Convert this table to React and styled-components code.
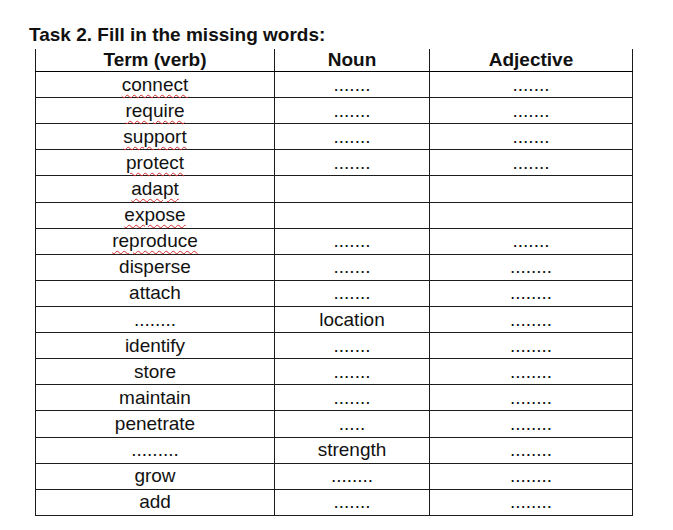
import styled, { createGlobalStyle } from 'styled-components';

const GlobalStyle = createGlobalStyle`
  html, body {
    margin: 0;
    padding: 0;
    background: #fff;
  }
  body {
    font-family: 'Liberation Sans', Arial, sans-serif;
    color: #111;
  }
`;

const Page = styled.div`
  width: 673px;
  height: 530px;
  padding: 24px 0 0 0;
  box-sizing: border-box;
  overflow: hidden;
`;

const Title = styled.h2`
  margin: 0 0 0 29px;
  font-size: 19px;
  line-height: 22px;
  font-weight: bold;
  color: #111;
`;

const Table = styled.table`
  margin: 3px 0 0 35px;
  border-collapse: collapse;
  table-layout: fixed;
  width: 597px;
`;

const HeadCell = styled.th`
  height: 21px;
  padding: 0;
  font-size: 19px;
  line-height: 22px;
  font-weight: bold;
  color: #111;
  text-align: center;
  vertical-align: bottom;
  border-left: 1px solid #1c1c1c;
  border-right: 1px solid #1c1c1c;
  border-bottom: 1px solid #000;
`;

const Cell = styled.td`
  height: 25.12px;
  padding: 0;
  font-size: 19px;
  line-height: 22px;
  text-align: center;
  vertical-align: middle;
  white-space: nowrap;
  border: 1px solid #1c1c1c;
  border-top-color: #000;
`;

const Word = styled.span`
  text-decoration: ${p => (p.$misspelled ? 'underline wavy #d62b2b' : 'none')};
  text-decoration-thickness: 1px;
  text-underline-offset: 3px;
`;

const rows = [
  ['connect', '.......', '.......', true],
  ['require', '.......', '.......', true],
  ['support', '.......', '.......', true],
  ['protect', '.......', '.......', true],
  ['adapt', '', '', true],
  ['expose', '', '', true],
  ['reproduce', '.......', '.......', true],
  ['disperse', '.......', '........'],
  ['attach', '.......', '........'],
  ['........', 'location', '........'],
  ['identify', '.......', '........'],
  ['store', '.......', '........'],
  ['maintain', '.......', '........'],
  ['penetrate', '.....', '........'],
  ['.........', 'strength', '........'],
  ['grow', '........', '........'],
  ['add', '.......', '........'],
];

export default function App() {
  return (
    <Page>
      <GlobalStyle />
      <Title>Task 2. Fill in the missing words:</Title>
      <Table>
        <colgroup>
          <col style={{ width: 239 }} />
          <col style={{ width: 155 }} />
          <col style={{ width: 203 }} />
        </colgroup>
        <thead>
          <tr>
            <HeadCell>Term (verb)</HeadCell>
            <HeadCell>Noun</HeadCell>
            <HeadCell>Adjective</HeadCell>
          </tr>
        </thead>
        <tbody>
          {rows.map(([term, noun, adj, wavy], i) => (
            <tr key={i}>
              <Cell>
                <Word $misspelled={wavy}>{term}</Word>
              </Cell>
              <Cell>{noun}</Cell>
              <Cell>{adj}</Cell>
            </tr>
          ))}
        </tbody>
      </Table>
    </Page>
  );
}
